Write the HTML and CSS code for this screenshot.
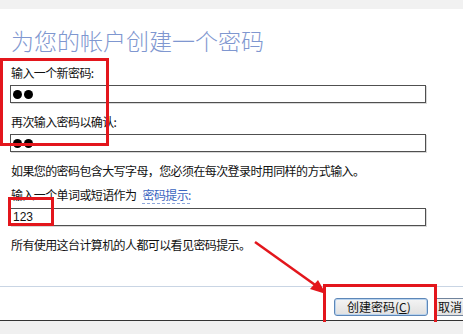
FILE: index.html
```html
<!DOCTYPE html>
<html lang="zh-CN">

<head>
    <meta charset="UTF-8">
    <title>创建密码</title>
    <link rel="stylesheet" href="styles.css">
</head>

<body>

    <div class="topbar"></div>

    <section class="panel">
        <h1 class="title">为您的帐户创建一个密码</h1>

        <p class="label">输入一个新密码:</p>
        <div class="field"><span class="dot"></span><span class="dot"></span></div>

        <p class="label gap">再次输入密码以确认:</p>
        <div class="field"><span class="dot"></span><span class="dot"></span></div>

        <p class="label note">如果您的密码包含大写字母，您必须在每次登录时用同样的方式输入。</p>

        <p class="label hint-label">输入一个单词或短语作为 <span class="hint-link">密码提示:</span></p>
        <div class="field">123</div>

        <p class="label gap">所有使用这台计算机的人都可以看见密码提示。</p>
    </section>

    <div class="actions">
        <button class="btn btn-main">创建密码(<u>C</u>)</button>
        <button class="btn">取消</button>
    </div>

    <div class="bottombar"></div>

    <!-- 红色标注 -->
    <div class="mark mark-pw"></div>
    <div class="mark mark-hint"></div>
    <div class="mark mark-btn"></div>
    <svg class="arrow" width="463" height="334" viewBox="0 0 463 334">
        <line x1="255" y1="242" x2="318" y2="287" stroke="#e3161c" stroke-width="2.5" />
        <polygon points="326,294 310,289 318,280" fill="#e3161c" />
    </svg>

</body>

</html>
```

FILE: styles.css
```css
body {
    margin: 0;
    width: 463px;
    height: 334px;
    overflow: hidden;
    position: relative;
    background-color: white;
    font-family: "Noto Sans CJK SC", "Noto Sans", sans-serif;
    font-size: 12px;
    color: #111;
}

.topbar {
    height: 9px;
    background-color: #f1f1f1;
}

.panel {
    box-sizing: border-box;
    padding: 16px 0 0 10px;
    height: 278px;
    border-bottom: 1px solid #c9d5e4;
}

.title {
    margin: 0 0 10px 1px;
    font-size: 23px;
    line-height: 30px;
    font-weight: 300;
    color: #7f97d0;
}

.label {
    margin: 0 0 4px 1px;
    line-height: 16px;
    letter-spacing: -0.6px;
    white-space: nowrap;
}

.gap {
    margin-top: 11px;
}

.note {
    margin-top: 11px;
    margin-bottom: 8px;
}

.hint-label {
    margin-bottom: 5px;
}

.hint-link {
    margin-left: 4px;
    color: #3a64c0;
    text-decoration: underline dashed #8fa8dc;
    text-underline-offset: 3px;
}

.field {
    box-sizing: border-box;
    width: 416px;
    height: 18px;
    border: 1px solid #505050;
    box-shadow: 1px 1px 0 #d8d8d8;
    display: flex;
    align-items: center;
    gap: 2px;
    padding-left: 2px;
    font-family: "Liberation Sans", sans-serif;
    font-size: 12px;
}

.dot {
    width: 9px;
    height: 9px;
    border-radius: 50%;
    background-color: #000;
}

.actions {
    display: flex;
    gap: 6px;
    padding: 11px 0 4px 334px;
    white-space: nowrap;
}

.btn {
    box-sizing: border-box;
    flex: none;
    width: 94px;
    height: 18px;
    padding: 0;
    border: 1px solid #70839c;
    border-radius: 3px;
    background: linear-gradient(#f4f4f4, #e0e0e0);
    font-family: "Noto Sans CJK SC", sans-serif;
    font-size: 12px;
    line-height: 14px;
    color: #111;
    text-align: left;
    padding-left: 3px;
}

.btn-main {
    border-color: #5d87b8;
    padding-left: 12px;
    box-shadow: inset 0 0 0 1px #b9d3ee;
}

.btn u {
    text-underline-offset: 1px;
}

.bottombar {
    height: 13px;
    border-top: 1px solid #333;
    background-color: #f0f0f0;
}

.mark {
    position: absolute;
    box-sizing: border-box;
    border: 3px solid #e3161c;
}

.mark-pw {
    left: 0;
    top: 58px;
    width: 109px;
    height: 88px;
}

.mark-hint {
    left: 8px;
    top: 197px;
    width: 46px;
    height: 29px;
}

.mark-btn {
    left: 323px;
    top: 284px;
    width: 114px;
    height: 38px;
    border-bottom: none;
}

.arrow {
    position: absolute;
    left: 0;
    top: 0;
}
```
